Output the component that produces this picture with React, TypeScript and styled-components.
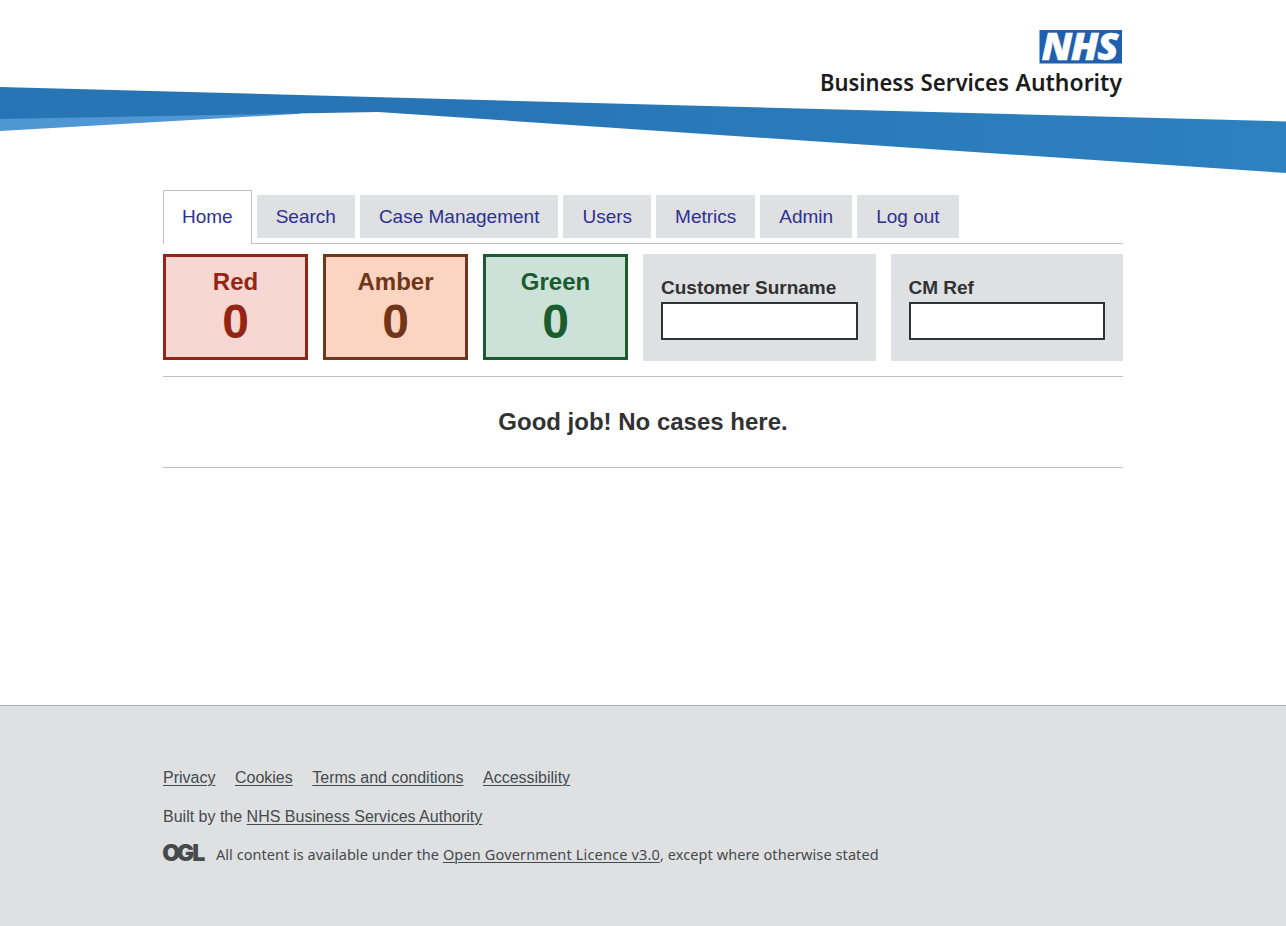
import React from 'react';
import styled, { createGlobalStyle } from 'styled-components';

const GlobalStyle = createGlobalStyle`
  *, *::before, *::after { box-sizing: border-box; }
  body {
    margin: 0;
    background: #fff;
    color: #323232;
    font-family: "Liberation Sans", Arial, sans-serif;
  }
`;

const Page = styled.div`
  min-height: 926px;
  display: flex;
  flex-direction: column;
`;

const Header = styled.header`
  position: relative;
  height: 190px;
  flex: none;
`;

const Swoosh = styled.svg`
  position: absolute;
  left: 0;
  top: 0;
  width: 100%;
  height: 190px;
`;

const Container = styled.div`
  width: 960px;
  margin: 0 auto;
`;

const Brand = styled(Container)`
  position: relative;
  display: flex;
  justify-content: flex-end;
  padding-top: 20px;
`;

const Logo = styled.svg`
  display: block;
  overflow: visible;
`;

const Main = styled.main`
  width: 960px;
  margin: 0 auto;
  flex: 1;
`;

const Tabs = styled.nav`
  display: flex;
  align-items: flex-start;
  gap: 5px;
  height: 54px;
  border-bottom: 1px solid #bfc1c3;
`;

const Tab = styled.a<{ $active?: boolean }>`
  margin-top: ${p => (p.$active ? 0 : 5)}px;
  height: ${p => (p.$active ? 54 : 43)}px;
  padding: ${p => (p.$active ? '0 18px' : '0 19px')};
  border: ${p => (p.$active ? '1px solid #bfc1c3' : '0')};
  border-bottom: 0;
  background: ${p => (p.$active ? '#fff' : '#dee0e2')};
  color: #2e3191;
  font-size: 19px;
  line-height: ${p => (p.$active ? 52 : 44)}px;
  text-decoration: none;
  white-space: nowrap;
`;

const Summary = styled.section`
  display: flex;
  align-items: flex-start;
  gap: 15px;
  padding: 10px 0 15px;
  border-bottom: 1px solid #bfc1c3;
`;

const tones = {
  red: { ink: '#942514', fill: '#f6d7d2' },
  amber: { ink: '#6f3619', fill: '#fbd5c2' },
  green: { ink: '#1a5c30', fill: '#cce1d8' },
};

const Stat = styled.a<{ $tone: keyof typeof tones }>`
  width: 145px;
  height: 106px;
  padding-top: 10px;
  border: 3px solid ${p => tones[p.$tone].ink};
  background: ${p => tones[p.$tone].fill};
  color: ${p => tones[p.$tone].ink};
  font-weight: 700;
  text-align: center;
`;

const StatLabel = styled.div`
  font-size: 24px;
  line-height: 30px;
`;

const StatValue = styled.div`
  font-size: 48px;
  line-height: 50px;
`;

const Filter = styled.label`
  flex: 1;
  height: 107px;
  padding: 21px 18px 0;
  background: #dee0e2;
  font-size: 19px;
  font-weight: 700;
  line-height: 25px;
`;

const FilterInput = styled.input`
  display: block;
  width: 100%;
  height: 38px;
  margin: 2px 0 0;
  border: 2px solid #323232;
  border-radius: 0;
  background: #fff;
`;

const Empty = styled.h2`
  margin: 0;
  height: 91px;
  border-bottom: 1px solid #bfc1c3;
  font-size: 24px;
  line-height: 90px;
  text-align: center;
`;

const Footer = styled.footer`
  flex: none;
  height: 221px;
  padding-top: 62px;
  border-top: 1px solid #a9aeb1;
  background: #dee0e2;
  color: #454a4d;
  font-size: 16px;
  line-height: 20px;
`;

const FooterLinks = styled.div`
  display: flex;
  gap: 19.5px;
  margin-bottom: 19px;
`;

const FooterLink = styled.a`
  color: inherit;
  text-decoration: underline;
  text-underline-offset: 2px;
  text-decoration-thickness: 1px;
`;

const Licence = styled.div`
  display: flex;
  align-items: flex-start;
  gap: 12px;
  margin-top: 17px;
  font-family: "Noto Sans", sans-serif;
  font-size: 14.5px;
  letter-spacing: 0.03px;
  white-space: nowrap;
`;

const LicenceLink = styled(FooterLink)`
  letter-spacing: 0.16px;
`;

const LicenceNote = styled.span`
  letter-spacing: 0.09px;
`;

const NhsLogo = () => (
  <Logo width="320" height="90" viewBox="803 20 320 90" role="img">
    <rect x="1039.5" y="30" width="82.5" height="33.5" fill="#205fae" />
    <text
      x="1041.5"
      y="60"
      fill="#fff"
      stroke="#fff"
      strokeWidth="0.3"
      fontFamily="Open Sans, sans-serif"
      fontWeight="800"
      fontStyle="italic"
      fontSize="37.5"
      letterSpacing="-1.5"
      textLength="75.5"
      lengthAdjust="spacingAndGlyphs"
    >
      NHS
    </text>
    <text
      y="91"
      fill="#1c1c1c"
      fontFamily="Noto Sans, sans-serif"
      fontWeight="600"
      fontSize="22.8"
    >
      <tspan x="820" textLength="94" lengthAdjust="spacingAndGlyphs">Business</tspan>
      <tspan x="920.5" textLength="88.5" lengthAdjust="spacingAndGlyphs">Services</tspan>
      <tspan x="1015.5" textLength="106.5" lengthAdjust="spacingAndGlyphs">Authority</tspan>
    </text>
  </Logo>
);

const OglLogo = () => (
  <Logo width="41" height="20" viewBox="0 0 41 20" role="img">
    <text
      x="-0.8 13.8 29.3"
      y="17"
      fill="#454a4d"
      fontFamily="Inter, sans-serif"
      fontWeight="900"
      fontSize="23"
    >
      OGL
    </text>
  </Logo>
);

const navItems = ['Home', 'Search', 'Case Management', 'Users', 'Metrics', 'Admin', 'Log out'];
const footerItems = ['Privacy', 'Cookies', 'Terms and conditions', 'Accessibility'];

export default function App() {
  return (
    <Page>
      <GlobalStyle />
      <Header>
        <Swoosh viewBox="0 0 1286 190" preserveAspectRatio="none">
          <defs>
            <linearGradient id="band" x1="0" x2="1" y1="0" y2="0">
              <stop offset="0.35" stopColor="#2875b5" />
              <stop offset="1" stopColor="#2d81bf" />
            </linearGradient>
          </defs>
          <polygon points="0,117 0,131 300,113.8 300,112" fill="#4f96d4" />
          <polygon points="0,87 1286,121.5 1286,173 378,112 0,119" fill="url(#band)" />
        </Swoosh>
        <Brand>
          <NhsLogo />
        </Brand>
      </Header>
      <Main>
        <Tabs>
          {navItems.map((item, i) => (
            <Tab key={item} $active={i === 0}>{item}</Tab>
          ))}
        </Tabs>
        <Summary>
          <Stat $tone="red"><StatLabel>Red</StatLabel><StatValue>0</StatValue></Stat>
          <Stat $tone="amber"><StatLabel>Amber</StatLabel><StatValue>0</StatValue></Stat>
          <Stat $tone="green"><StatLabel>Green</StatLabel><StatValue>0</StatValue></Stat>
          <Filter>Customer Surname<FilterInput /></Filter>
          <Filter>CM Ref<FilterInput /></Filter>
        </Summary>
        <Empty>Good job! No cases here.</Empty>
      </Main>
      <Footer>
        <Container>
          <FooterLinks>
            {footerItems.map(item => <FooterLink key={item}>{item}</FooterLink>)}
          </FooterLinks>
          <div>Built by the <FooterLink>NHS Business Services Authority</FooterLink></div>
          <Licence>
            <OglLogo />
            <span>
              All content is available under the <LicenceLink>Open Government Licence v3.0</LicenceLink>
              <LicenceNote>, except where otherwise stated</LicenceNote>
            </span>
          </Licence>
        </Container>
      </Footer>
    </Page>
  );
}
